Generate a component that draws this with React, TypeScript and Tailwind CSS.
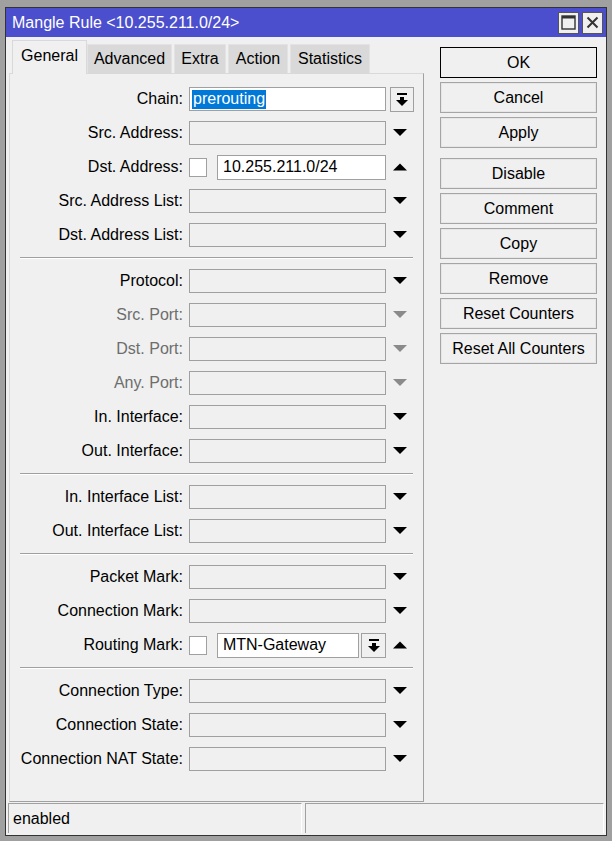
import React from "react";

type Row =
  | { kind: "sep" }
  | {
      kind: "row";
      label: string;
      disabled?: boolean;
      variant?: "chain" | "check" | "routing";
      value?: string;
      arrow?: "down" | "up" | "none";
    };

const rows: Row[] = [
  { kind: "row", label: "Chain:", variant: "chain", value: "prerouting", arrow: "none" },
  { kind: "row", label: "Src. Address:" },
  { kind: "row", label: "Dst. Address:", variant: "check", value: "10.255.211.0/24", arrow: "up" },
  { kind: "row", label: "Src. Address List:" },
  { kind: "row", label: "Dst. Address List:" },
  { kind: "sep" },
  { kind: "row", label: "Protocol:" },
  { kind: "row", label: "Src. Port:", disabled: true },
  { kind: "row", label: "Dst. Port:", disabled: true },
  { kind: "row", label: "Any. Port:", disabled: true },
  { kind: "row", label: "In. Interface:" },
  { kind: "row", label: "Out. Interface:" },
  { kind: "sep" },
  { kind: "row", label: "In. Interface List:" },
  { kind: "row", label: "Out. Interface List:" },
  { kind: "sep" },
  { kind: "row", label: "Packet Mark:" },
  { kind: "row", label: "Connection Mark:" },
  { kind: "row", label: "Routing Mark:", variant: "routing", value: "MTN-Gateway", arrow: "up" },
  { kind: "sep" },
  { kind: "row", label: "Connection Type:" },
  { kind: "row", label: "Connection State:" },
  { kind: "row", label: "Connection NAT State:" },
];

function Tri({ dir, gray }: { dir: "down" | "up"; gray?: boolean }) {
  const fill = gray ? "#8a8a8a" : "#000000";
  return (
    <svg width="14" height="8" viewBox="0 0 14 8">
      {dir === "down" ? (
        <polygon points="0,0 14,0 7,7" fill={fill} />
      ) : (
        <polygon points="0,7.5 14,7.5 7,0.5" fill={fill} />
      )}
    </svg>
  );
}

function DropBtnIcon() {
  return (
    <svg width="12" height="13" viewBox="0 0 12 13">
      <rect x="1" y="0" width="10" height="2" fill="#000" />
      <rect x="4" y="4" width="4" height="3" fill="#000" />
      <polygon points="0,7 12,7 6,13" fill="#000" />
    </svg>
  );
}

function Tab({ label, w, active }: { label: string; w: string; active?: boolean }) {
  if (active) {
    return (
      <div
        className={`${w} h-[34px] -mb-[1px] bg-[#f0f0f0] border-t border-l border-r border-[#d9d9d9] flex items-center justify-center relative z-10`}
      >
        <span className="pb-[4px]">{label}</span>
      </div>
    );
  }
  return (
    <div className={`${w} h-[29px] bg-[#d9d9d9] border-t border-l border-r border-[#e3e3e3] flex items-center justify-center`}>
      {label}
    </div>
  );
}

function Btn({ label, primary, className = "" }: { label: string; primary?: boolean; className?: string }) {
  return (
    <div
      className={`w-[157px] h-[31px] flex items-center justify-center bg-[#f0f0f0] border ${
        primary ? "border-[#000]" : "border-[#a5a5a5] shadow-[inset_0_0_0_1px_#e6e6e6]"
      } ${className}`}
    >
      {label}
    </div>
  );
}

export default function App() {
  return (
    <div
      className="w-[612px] h-[841px] bg-[#a0a0a0] pt-[7px] pl-[5px] text-[16px] text-black leading-none"
      style={{ fontFamily: '"Liberation Sans", Arial, sans-serif' }}
    >
      <div className="w-[602px] h-[829px] border border-[#333] bg-[#f0f0f0] flex flex-col">
        {/* Title bar */}
        <div className="h-[29px] bg-[#4b4fcd] flex items-center pl-[6px] pr-[3px] text-white">
          <span className="text-[16px]">Mangle Rule &lt;10.255.211.0/24&gt;</span>
          <div className="ml-auto flex gap-[3px]">
            <div className="w-[21px] h-[22px] bg-[#f0f0f0] border border-[#555] flex items-center justify-center">
              <svg width="15" height="15" viewBox="0 0 15 15">
                <rect x="1" y="1" width="13" height="13" fill="none" stroke="#333" strokeWidth="1.4" />
                <rect x="1" y="1" width="13" height="2.5" fill="#333" />
              </svg>
            </div>
            <div className="w-[21px] h-[22px] bg-[#f0f0f0] border border-[#555] flex items-center justify-center">
              <svg width="13" height="13" viewBox="0 0 13 13">
                <path d="M1.5 1.5 L11.5 11.5 M11.5 1.5 L1.5 11.5" stroke="#333" strokeWidth="2" />
              </svg>
            </div>
          </div>
        </div>

        {/* Body */}
        <div className="h-[765px] flex">
          <div className="pl-[3px] flex flex-col">
            {/* Tabs */}
            <div className="mt-[3px] h-[33px] flex items-end pl-[3px] gap-[2px]">
              <Tab label="General" w="w-[75px]" active />
              <div className="-ml-[2px] flex items-end gap-[2px]">
                <Tab label="Advanced" w="w-[85px]" />
                <Tab label="Extra" w="w-[52px]" />
                <Tab label="Action" w="w-[60px]" />
                <Tab label="Statistics" w="w-[80px]" />
              </div>
            </div>
            {/* Panel */}
            <div className="w-[415px] h-[729px] border border-[#d9d9d9] border-r-[#a0a0a0] border-b-[#a0a0a0] pt-[8px] flex flex-col">
              {rows.map((r, i) => {
                if (r.kind === "sep") {
                  return (
                    <div key={i} className="h-[12px] flex items-center pl-[10px] pr-[10px]">
                      <div className="w-full border-t border-[#a0a0a0] border-b border-b-white" />
                    </div>
                  );
                }
                const gray = r.disabled;
                return (
                  <div key={i} className="h-[34px] flex items-center">
                    <div className={`w-[173px] text-right ${gray ? "text-[#6d6d6d]" : "text-black"}`}>{r.label}</div>
                    <div className="ml-[6px] w-[197px] h-[24px] flex items-center">
                      {r.variant === "chain" && (
                        <div className="w-full h-full bg-white border border-[#a0a0a0] flex items-center pl-[2px]">
                          <span className="bg-[#0078d7] text-white px-[1px] h-[19px] flex items-center">{r.value}</span>
                        </div>
                      )}
                      {(r.variant === "check" || r.variant === "routing") && (
                        <div className="w-full h-full flex items-center">
                          <div className="w-[18px] h-[19px] bg-white border border-[#a0a0a0]" />
                          <div
                            className={`ml-[10px] ${
                              r.variant === "routing" ? "w-[143px]" : "w-[169px]"
                            } h-[25px] bg-white border border-[#a0a0a0] flex items-center pl-[5px]`}
                          >
                            {r.value}
                          </div>
                          {r.variant === "routing" && (
                            <div className="ml-[2px] w-[25px] h-[25px] bg-[#f0f0f0] border border-[#a0a0a0] flex items-center justify-center">
                              <DropBtnIcon />
                            </div>
                          )}
                        </div>
                      )}
                      {!r.variant && <div className="w-full h-full border border-[#a0a0a0] bg-[#f0f0f0]" />}
                    </div>
                    {r.variant === "chain" ? (
                      <div className="ml-[4px] w-[24px] h-[25px] bg-[#f0f0f0] border border-[#a0a0a0] flex items-center justify-center">
                        <DropBtnIcon />
                      </div>
                    ) : (
                      <div className="ml-[7px] w-[14px] flex items-center justify-center">
                        <Tri dir={r.arrow === "up" ? "up" : "down"} gray={gray} />
                      </div>
                    )}
                  </div>
                );
              })}
            </div>
          </div>

          {/* Buttons */}
          <div className="ml-[16px] mt-[10px] flex flex-col gap-[4px]">
            <Btn label="OK" primary />
            <Btn label="Cancel" />
            <Btn label="Apply" />
            <Btn label="Disable" className="mt-[6px]" />
            <Btn label="Comment" />
            <Btn label="Copy" />
            <Btn label="Remove" />
            <Btn label="Reset Counters" />
            <Btn label="Reset All Counters" />
          </div>
        </div>

        {/* Status bar */}
        <div className="mt-[1px] h-[30px] flex pl-[2px] gap-[3px]">
          <div className="w-[294px] h-full border-t border-l border-[#a0a0a0] border-r border-r-white flex items-center pl-[4px]">
            enabled
          </div>
          <div className="w-[299px] h-full border-t border-l border-[#a0a0a0] border-r border-r-white" />
        </div>
      </div>
    </div>
  );
}
